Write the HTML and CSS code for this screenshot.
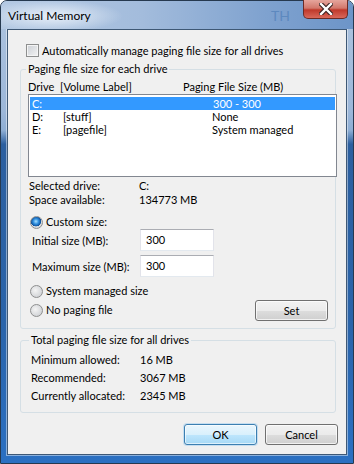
FILE: index.html
```html
<!DOCTYPE html>
<html lang="en">
<head>
    <meta charset="UTF-8">
    <meta name="viewport" content="width=device-width, initial-scale=1.0">
    <title>Virtual Memory</title>
    <link rel="stylesheet" href="styles.css">
</head>
<body>
    <div class="window">
        <div class="titlebar">
            <span class="title">Virtual Memory</span>
            <span class="watermark">TH</span>
            <span class="close">
                <svg width="14" height="12" viewBox="0 0 14 12">
                    <path d="M2 1 L12 11 M12 1 L2 11" stroke="#3b2323" stroke-width="4.5" stroke-linecap="square"/>
                    <path d="M2 1 L12 11 M12 1 L2 11" stroke="#ffffff" stroke-width="2.4" stroke-linecap="square"/>
                </svg>
            </span>
        </div>

        <div class="client">
            <label class="auto-row"><span class="checkbox"></span>Automatically manage paging file size for all drives</label>

            <!-- Paging file per drive -->
            <fieldset class="group drives">
                <legend>Paging file size for each drive</legend>
                <div class="list-head">
                    <span class="col-drive">Drive</span>
                    <span class="col-label">[Volume Label]</span>
                    <span>Paging File Size (MB)</span>
                </div>
                <div class="listbox">
                    <div class="row selected"><span class="c1">C:</span><span class="c2"></span><span>300 - 300</span></div>
                    <div class="row"><span class="c1">D:</span><span class="c2">[stuff]</span><span>None</span></div>
                    <div class="row"><span class="c1">E:</span><span class="c2">[pagefile]</span><span>System managed</span></div>
                </div>

                <div class="info">
                    <div class="info-row"><span class="info-key">Selected drive:</span><span>C:</span></div>
                    <div class="info-row"><span class="info-key">Space available:</span><span>134773 MB</span></div>
                </div>

                <label class="radio-row custom"><span class="radio checked"></span>Custom size:</label>
                <div class="field first"><span class="field-key">Initial size (MB):</span><span class="textbox">300</span></div>
                <div class="field"><span class="field-key">Maximum size (MB):</span><span class="textbox">300</span></div>

                <div class="bottom-row">
                    <div class="radios">
                        <label class="radio-row"><span class="radio"></span>System managed size</label>
                        <label class="radio-row"><span class="radio"></span>No paging file</label>
                    </div>
                    <button class="btn set">Set</button>
                </div>
            </fieldset>

            <!-- Totals -->
            <fieldset class="group totals">
                <legend>Total paging file size for all drives</legend>
                <div class="total-row"><span class="total-key">Minimum allowed:</span><span>16 MB</span></div>
                <div class="total-row"><span class="total-key">Recommended:</span><span>3067 MB</span></div>
                <div class="total-row"><span class="total-key">Currently allocated:</span><span>2345 MB</span></div>
            </fieldset>

            <div class="actions">
                <button class="btn default">OK</button>
                <button class="btn">Cancel</button>
            </div>
        </div>
    </div>
</body>
</html>
```

FILE: styles.css
```css
/* Windows 7 style dialog */
* {
    box-sizing: border-box;
}

body {
    margin: 0;
    background: #ffffff;
    font-family: "Lato", "Liberation Sans", sans-serif;
    font-size: 11px;
    color: #000;
}

.window {
    width: 354px;
    height: 464px;
    border: 1px solid #26394f;
    border-radius: 7px 7px 0 0;
    background: linear-gradient(to bottom, #aec4df 0%, #9cb7d9 24%, #8eaed4 28%, #2c5f9f 31%, #2a64aa 70%, #2b70c2 100%);
    padding: 0 6px;
    display: flex;
    flex-direction: column;
}

/* Title bar */
.titlebar {
    height: 28px;
    display: flex;
    align-items: center;
    position: relative;
    margin: 0 -6px;
    padding-left: 7px;
    border-radius: 6px 6px 0 0;
    background:
        radial-gradient(ellipse 70px 16px at 52px 15px, rgba(235, 242, 250, 0.95), rgba(235, 242, 250, 0) 100%),
        linear-gradient(to right, #b4c9e3 0%, #a3bcdc 40%, #7fa2cf 75%, #6d95c8 100%);
}

.title {
    font-size: 12px;
    color: #000;
}

.watermark {
    margin-left: auto;
    margin-right: 63px;
    font-size: 14px;
    color: #5d89bf;
}

.close {
    position: absolute;
    top: -1px;
    right: 5px;
    width: 45px;
    height: 19px;
    border: 1px solid #6b2b26;
    border-top: none;
    border-radius: 0 0 5px 5px;
    background: linear-gradient(to bottom, #e6a59c 0%, #d2786c 45%, #c0392b 55%, #d9685a 100%);
    display: flex;
    align-items: center;
    justify-content: center;
}

/* Client area */
.client {
    height: 426px;
    background: #f0f0f0;
    border: 1px solid #3e5875;
    box-shadow: 0 0 0 1px rgba(255, 255, 255, 0.45);
    display: flex;
    flex-direction: column;
}

.auto-row {
    margin-top: 14px;
    padding-left: 18px;
    height: 13px;
    line-height: 13px;
    display: flex;
    align-items: center;
}

.checkbox {
    width: 13px;
    height: 13px;
    margin-right: 3px;
    border: 1px solid #8e8f8f;
    background: linear-gradient(135deg, #cbcfd5 0%, #f3f3f3 100%);
    box-shadow: inset 0 0 0 1px #f4f4f4;
}

/* Group boxes */
.group {
    border: 1px solid #d5dfe5;
    border-radius: 3px;
    margin: 5px 10px 0 12px;
    padding: 0 0 7px 7px;
    min-width: 0;
}

.group legend {
    padding: 0 2px;
    margin-left: -2px;
    line-height: 14px;
}

.totals {
    margin-top: 4px;
    padding-left: 10px;
}

.list-head {
    display: flex;
    margin-top: 4px;
    height: 14px;
    line-height: 14px;
}

.col-drive {
    width: 32px;
}

.col-label {
    width: 123px;
}

.listbox {
    width: 309px;
    height: 83px;
    background: #fff;
    border: 1px solid #828790;
    padding: 2px 1px;
}

.row {
    display: flex;
    height: 13px;
    line-height: 13px;
    padding-left: 2px;
}

.row .c1 {
    width: 31px;
}

.row .c2 {
    width: 149px;
}

.row.selected {
    background: #3399ff;
    color: #fff;
}

.row.selected span:last-child {
    padding-left: 1px;
}

.info {
    margin-top: 2px;
    padding-left: 1px;
}

.info-row {
    display: flex;
    height: 14px;
    line-height: 14px;
}

.info-key {
    width: 110px;
}

/* Radios and fields */
.radio-row {
    display: flex;
    align-items: center;
    height: 14px;
    line-height: 14px;
    padding-left: 2px;
}

.custom {
    margin-top: 8px;
}

.radio {
    width: 13px;
    height: 13px;
    border-radius: 50%;
    margin-right: 3px;
    border: 1px solid #8e8f8f;
    background: radial-gradient(circle at 40% 40%, #f4f4f4 0%, #d4d6d9 70%, #c4c7cb 100%);
}

.radio.checked {
    background:
        radial-gradient(circle at 45% 40%, #a8e0ff 0%, #2f8ede 30%, #0f4f99 55%, rgba(0, 0, 0, 0) 58%),
        radial-gradient(circle, #e9e9e9 0%, #cfd2d6 100%);
}

.field {
    display: flex;
    align-items: center;
    height: 22px;
    margin-top: 4px;
    padding-left: 4px;
}

.field.first {
    margin-top: 0;
}

.field-key {
    width: 108px;
}

.textbox {
    width: 74px;
    height: 22px;
    line-height: 20px;
    padding-left: 5px;
    background: #fff;
    border: 1px solid #e2e3ea;
    border-top-color: #abadb3;
    border-bottom-color: #e3e9ef;
}

.bottom-row {
    display: flex;
    align-items: flex-end;
    justify-content: space-between;
    margin-top: 7px;
}

.radios {
    display: flex;
    flex-direction: column;
    gap: 5px;
    padding-bottom: 4px;
}

/* Buttons */
.btn {
    width: 73px;
    height: 21px;
    padding: 0;
    font: inherit;
    color: #000;
    border: 1px solid #707070;
    border-radius: 3px;
    background: linear-gradient(to bottom, #f2f2f2 0%, #ebebeb 50%, #dddddd 51%, #cfcfcf 100%);
    box-shadow: inset 0 0 0 1px rgba(255, 255, 255, 0.7);
}

.btn.set {
    margin-right: 7px;
}

.btn.default {
    border-color: #3c7fb1;
    background: linear-gradient(to bottom, #eaf6fd 0%, #d9f0fc 50%, #bee6fd 51%, #a7d9f5 100%);
    box-shadow: inset 0 0 0 1px rgba(255, 255, 255, 0.6), 0 0 0 1px rgba(120, 190, 240, 0.35);
}

/* Totals */
.total-row {
    display: flex;
    height: 18px;
    line-height: 18px;
}

.total-row:first-of-type {
    margin-top: 4px;
}

.total-key {
    width: 109px;
}

.actions {
    display: flex;
    justify-content: flex-end;
    gap: 8px;
    margin-top: 11px;
    padding-right: 8px;
}
```
